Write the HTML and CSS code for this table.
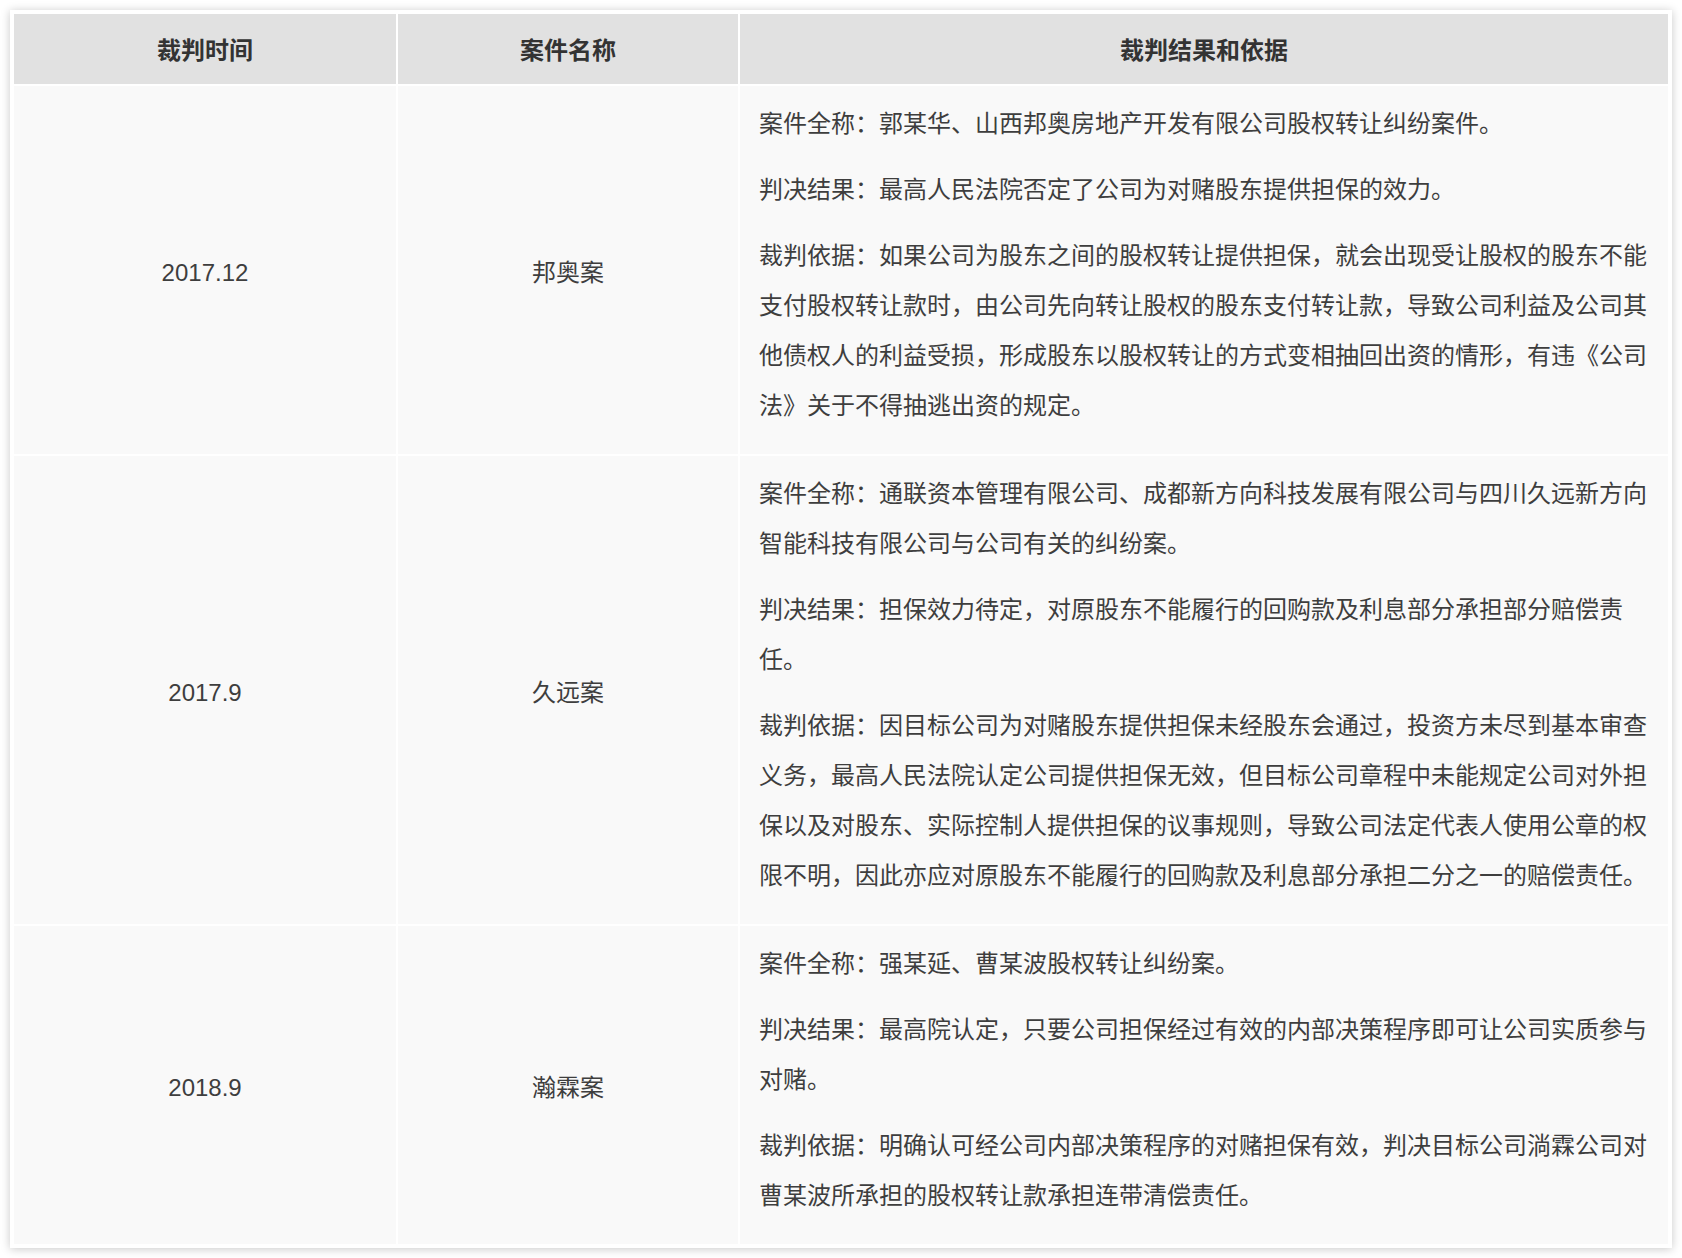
FILE: index.html
```html
<!DOCTYPE html>
<html lang="zh-CN">
<head>
<meta charset="utf-8">
<title>裁判案例</title>
<link rel="stylesheet" href="styles.css">
</head>
<body>
<div class="card">
  <table class="cases">
    <colgroup>
      <col class="c-date">
      <col class="c-name">
      <col class="c-result">
    </colgroup>
    <thead>
      <tr>
        <th>裁判时间</th>
        <th>案件名称</th>
        <th>裁判结果和依据</th>
      </tr>
    </thead>
    <tbody>
      <tr class="r1">
        <td class="mid">2017.12</td>
        <td class="mid">邦奥案</td>
        <td class="detail">
          <p>案件全称：郭某华、山西邦奥房地产开发有限公司股权转让纠纷案件。</p>
          <p>判决结果：最高人民法院否定了公司为对赌股东提供担保的效力。</p>
          <p>裁判依据：如果公司为股东之间的股权转让提供担保，就会出现受让股权的股东不能支付股权转让款时，由公司先向转让股权的股东支付转让款，导致公司利益及公司其他债权人的利益受损，形成股东以股权转让的方式变相抽回出资的情形，有违《公司法》关于不得抽逃出资的规定。</p>
        </td>
      </tr>
      <tr class="r2">
        <td class="mid">2017.9</td>
        <td class="mid">久远案</td>
        <td class="detail">
          <p>案件全称：通联资本管理有限公司、成都新方向科技发展有限公司与四川久远新方向智能科技有限公司与公司有关的纠纷案。</p>
          <p>判决结果：担保效力待定，对原股东不能履行的回购款及利息部分承担部分赔偿责任。</p>
          <p>裁判依据：因目标公司为对赌股东提供担保未经股东会通过，投资方未尽到基本审查义务，最高人民法院认定公司提供担保无效，但目标公司章程中未能规定公司对外担保以及对股东、实际控制人提供担保的议事规则，导致公司法定代表人使用公章的权限不明，因此亦应对原股东不能履行的回购款及利息部分承担二分之一的赔偿责任。</p>
        </td>
      </tr>
      <tr class="r3">
        <td class="mid">2018.9</td>
        <td class="mid">瀚霖案</td>
        <td class="detail">
          <p>案件全称：强某延、曹某波股权转让纠纷案。</p>
          <p>判决结果：最高院认定，只要公司担保经过有效的内部决策程序即可让公司实质参与对赌。</p>
          <p>裁判依据：明确认可经公司内部决策程序的对赌担保有效，判决目标公司淌霖公司对曹某波所承担的股权转让款承担连带清偿责任。</p>
        </td>
      </tr>
    </tbody>
  </table>
</div>
</body>
</html>
```

FILE: styles.css
```css
html, body {
  margin: 0;
  padding: 0;
  background: #ffffff;
}

body {
  font-family: "Liberation Sans", "Noto Sans CJK SC", sans-serif;
  color: #3e3e3e;
}

.card {
  margin: 10px;
  width: 1658px;
  padding: 2px;
  background: #ffffff;
  box-shadow: 0 1px 9px rgba(0, 0, 0, 0.22);
}

.cases {
  table-layout: fixed;
  width: 1658px;
  border-collapse: separate;
  border-spacing: 2px;
  font-size: 24px;
  line-height: 50px;
}

.c-date { width: 382px; }
.c-name { width: 340px; }
.c-result { width: 928px; }

.cases th {
  background: #e1e1e1;
  color: #333333;
  font-weight: bold;
  text-align: center;
  padding: 12px 19px 8px;
}

.cases td {
  background: #f9f9f9;
}

.cases td.mid {
  text-align: center;
  vertical-align: middle;
  padding: 6px 10px 0;
}

.cases td.detail {
  padding: 13px 19px 23px 19px;
  vertical-align: top;
}

.detail p {
  margin: 0 0 16px;
}

.detail p:last-child {
  margin-bottom: 0;
}
```
